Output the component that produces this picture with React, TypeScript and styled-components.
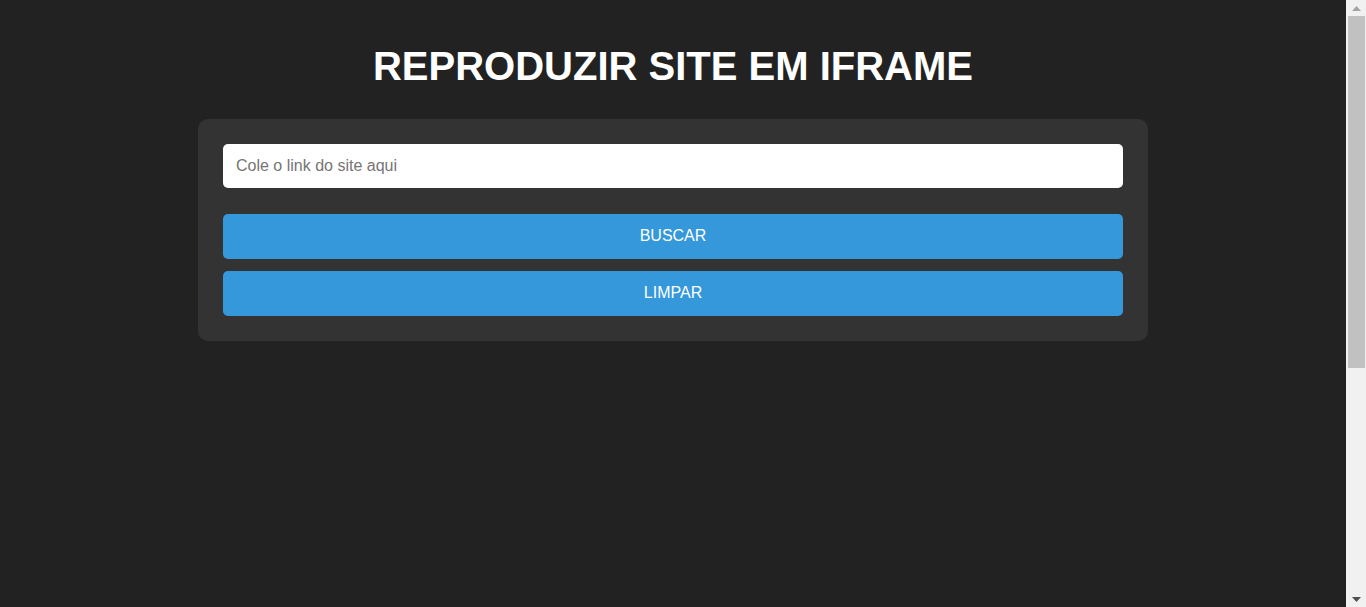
import React, { useState } from "react";
import styled, { createGlobalStyle } from "styled-components";

const GlobalStyle = createGlobalStyle`
  html, body {
    margin: 0;
    padding: 0;
    background: #222222;
    overflow: hidden;
  }
  body {
    font-family: "Liberation Sans", Arial, sans-serif;
    color: #ffffff;
  }
  * { box-sizing: border-box; }
`;

const Shell = styled.div`
  display: grid;
  grid-template-columns: 1fr 20px;
  height: 100vh;
`;

const Scroller = styled.div`
  overflow-y: auto;
  scrollbar-width: none;
  &::-webkit-scrollbar { display: none; }
`;

const Rail = styled.div`
  display: flex;
  flex-direction: column;
  background: #f1f1f1;
  height: 100vh;
`;

const RailButton = styled.div`
  height: 16px;
  flex: 0 0 16px;
  display: flex;
  align-items: center;
  justify-content: center;
`;

const Track = styled.div`
  flex: 1;
  padding: 0 1px 0 2px;
`;

const Thumb = styled.div`
  height: 352px;
  background: #c1c1c1;
`;

const Page = styled.main`
  display: flex;
  flex-direction: column;
  align-items: center;
  padding: 43px 20px 20px;
`;

const Title = styled.h1`
  margin: 0 0 30px;
  font-size: 40px;
  line-height: 46px;
  font-weight: 700;
  color: #ffffff;
  text-align: center;
`;

const Card = styled.section`
  width: 950px;
  max-width: 100%;
  background: #333333;
  border-radius: 10px;
  padding: 25px;
  display: flex;
  flex-direction: column;
`;

const Input = styled.input`
  width: 100%;
  height: 44px;
  padding: 0 13px;
  border: none;
  border-radius: 5px;
  background: #ffffff;
  font-family: "Liberation Sans", Arial, sans-serif;
  font-size: 16px;
  color: #222;
  outline: none;
  margin-bottom: 26px;
  &::placeholder { color: #757575; }
`;

const Buttons = styled.div`
  display: flex;
  flex-direction: column;
  gap: 12px;
`;

const Button = styled.button`
  width: 100%;
  height: 45px;
  padding: 0 0 2px;
  border: none;
  border-radius: 5px;
  background: #3498db;
  color: #ffffff;
  font-family: "Liberation Sans", Arial, sans-serif;
  font-size: 16px;
  cursor: pointer;
`;

const FrameArea = styled.div`
  width: 950px;
  max-width: 100%;
  height: 610px;
  margin-top: 20px;
`;

export default function App() {
  const [url, setUrl] = useState("");
  return (
    <>
      <GlobalStyle />
      <Shell>
        <Scroller>
          <Page>
            <Title>REPRODUZIR SITE EM IFRAME</Title>
            <Card>
              <Input
                type="text"
                placeholder="Cole o link do site aqui"
                value={url}
                onChange={(e) => setUrl(e.target.value)}
              />
              <Buttons>
                <Button>BUSCAR</Button>
                <Button onClick={() => setUrl("")}>LIMPAR</Button>
              </Buttons>
            </Card>
            <FrameArea />
          </Page>
        </Scroller>
        <Rail aria-hidden="true">
          <RailButton>
            <svg width="9" height="5" viewBox="0 0 9 5">
              <polygon points="0,5 4.5,0 9,5" fill="#a3a3a3" />
            </svg>
          </RailButton>
          <Track>
            <Thumb />
          </Track>
          <RailButton>
            <svg width="9" height="5" viewBox="0 0 9 5">
              <polygon points="0,0 9,0 4.5,5" fill="#505050" />
            </svg>
          </RailButton>
        </Rail>
      </Shell>
    </>
  );
}
